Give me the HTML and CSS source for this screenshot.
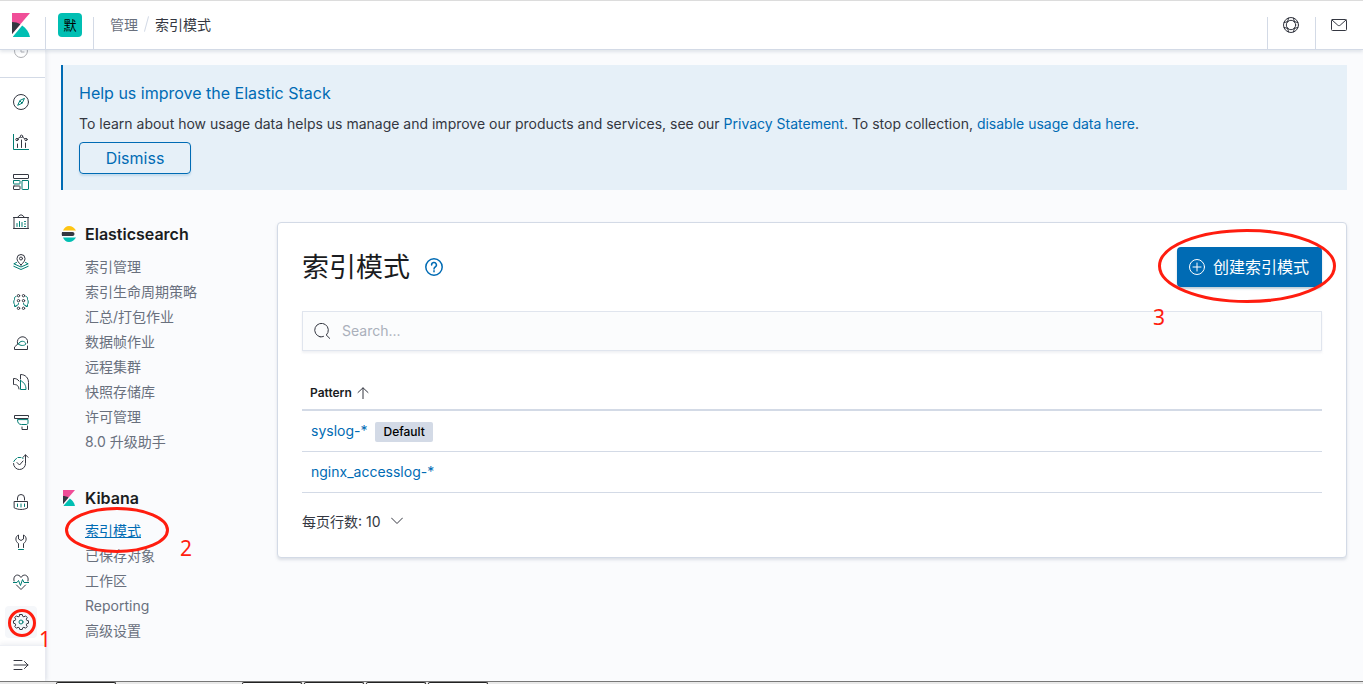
FILE: index.html
```html
<!DOCTYPE html>
<html lang="zh-CN">
<head>
<meta charset="utf-8">
<title>索引模式 - Kibana</title>
<link rel="stylesheet" href="styles.css">
</head>
<body>
<header class="header">
  <a class="header-logo" href="#" aria-label="Kibana">
    <svg width="18" height="24" viewBox="0 0 18 24"><path fill="#F04E98" d="M0 0v21L18 0z"/><path fill="#343741" d="M0 9v12l8.300-9.800C5.900 9.800 3.100 9 0 9z"/><path fill="#00BFB3" d="M10.200 12.600 1 23.400V24h17c-.9-4.700-3.800-8.800-7.800-11.400z"/></svg>
  </a>
  <span class="divider"></span>
  <button class="space" type="button" aria-label="默认"><span class="space-avatar">默</span></button>
  <span class="divider"></span>
  <nav class="crumbs" aria-label="breadcrumb">
    <a href="#">管理</a><span class="slash"></span><span class="crumb-current">索引模式</span>
  </nav>
  <span class="divider"></span>
  <button class="header-button" type="button" aria-label="Help">
    <svg class="icon" viewBox="0 0 16 16"><circle cx="8" cy="8" r="7.500"/><circle cx="8" cy="8" r="4.700"/><path d="M5.600 1.200 4.300 5.200M1.200 5.600l4-1.300M10.400 1.200l1.300 4M14.800 5.600l-4-1.300M5.600 14.800l-1.300-4M1.200 10.400l4 1.300M10.400 14.800l1.300-4M14.800 10.400l-4 1.300"/></svg>
  </button>
  <span class="divider"></span>
  <button class="header-button" type="button" aria-label="Newsfeed">
    <svg class="icon" viewBox="0 0 16 16"><rect x=".5" y="2.500" width="15" height="11" rx="1"/><path d="m1 3 5.800 5.200c.7.600 1.700.600 2.400 0L15 3"/></svg>
  </button>
</header>

<div class="body">
  <nav class="sidebar" aria-label="Kibana">
    <div class="recent"><svg class="icon" viewBox="0 0 16 16"><circle cx="8" cy="9" r="6.500"/><path d="M8 5v5h3"/></svg></div>
    <ul class="apps">
      <li><a href="#" aria-label="Discover"><svg class="icon" viewBox="0 0 16 16"><circle cx="8" cy="8" r="7.500"/><path class="teal" d="m11.300 4.700-2.100 4.500-4.500 2.100 2.100-4.500zM7 7l2 2"/></svg></a></li>
      <li><a href="#" aria-label="Visualize"><svg class="icon" viewBox="0 0 16 16"><path class="teal" d="M.5 0v15.500H16"/><path d="M4.500 10v3.500M8.500 6v7.500M12.500 9v4.500M5 4.500 7.500 3M9.500 3l2 1.500"/><circle cx="4" cy="5.500" r="1.200"/><circle cx="8.500" cy="2.300" r="1.200"/><circle cx="13" cy="5.500" r="1.200"/></svg></a></li>
      <li><a href="#" aria-label="Dashboard"><svg class="icon" viewBox="0 0 16 16"><rect x=".5" y=".5" width="15" height="4" rx=".5"/><rect x=".5" y="12" width="6.500" height="3.500" rx=".5"/><rect class="teal" x=".5" y="6.500" width="6.500" height="3.500" rx=".5"/><rect class="teal" x="9" y="6.500" width="6.500" height="9" rx=".5"/></svg></a></li>
      <li><a href="#" aria-label="Canvas"><svg class="icon" viewBox="0 0 16 16"><path d="M.5 3.500h15M1 4v10M15 4v10M.5 14.500h15M4.500 3.300 7 1h2l2.500 2.300"/><path class="teal" d="M4 9.500v3M6.500 7.500v5M9 8.500v4M12.500 7.500h-1M12.500 10h-1M12.500 12.500h-1"/></svg></a></li>
      <li><a href="#" aria-label="Maps"><svg class="icon" viewBox="0 0 16 16"><path d="M8 11C5.500 8.500 4 6.700 4 4.500a4 4 0 0 1 8 0C12 6.700 10.500 8.500 8 11z"/><circle cx="8" cy="4.500" r="1.500"/><path class="teal" d="M3.500 8.500.8 9.800 8 13l7.200-3.200-2.700-1.300M.8 12.300 8 15.500l7.200-3.200"/></svg></a></li>
      <li><a href="#" aria-label="Machine Learning"><svg class="icon" viewBox="0 0 16 16"><g><circle cx="5.500" cy="1.700" r="1.200"/><circle cx="10.500" cy="1.700" r="1.200"/><circle cx="5.500" cy="6.700" r="1.200"/><circle cx="10.500" cy="6.700" r="1.200"/><circle cx="5.500" cy="14.300" r="1.200"/><circle cx="10.500" cy="14.300" r="1.200"/></g><path class="teal" d="M3 2.500c-1.500 0-1.500 1-1.500 3C.5 7 .5 9 1.500 10.500v2h1.500M5.500 9.500c0 1.500-.8 2-2.500 2M13 2.500c1.500 0 1.500 1 1.500 3 1 1.500 1 3.500 0 5v2h-1.500M10.500 9.500c0 1.500.8 2 2.500 2"/></svg></a></li>
      <li><a href="#" aria-label="Infrastructure"><svg class="icon" viewBox="0 0 16 16"><path d="M4.500 9.500A5.200 5.200 0 1 1 14.500 6.500V9M14.500 12v3.500h-13V13L5 9.800"/><path class="teal" d="M5.500 10c1.200-3.700 6.300-3.700 7.500 0-1.500 2-6 2-7.500 0z"/></svg></a></li>
      <li><a href="#" aria-label="Logs"><svg class="icon" viewBox="0 0 16 16"><path d="M6 15C5.500 11 3.500 10.500.5 10.500v-6C3 4.500 4.500 5 6 7M7.500 5V.5c5 0 8 3.500 8 8v7"/><path class="teal" d="M7.500 6.500v9h5.500c0-4-1.500-7-5.500-9z"/></svg></a></li>
      <li><a href="#" aria-label="APM"><svg class="icon" viewBox="0 0 16 16"><path d="M15.500 3V1.500H1.500v3H15M9 13v2.500h5.500V12"/><path class="teal" d="M15 6v3c0 1-1 1.500-2 1.500H8.500C6 10.500 4.500 9 4.500 6z"/></svg></a></li>
      <li><a href="#" aria-label="Uptime"><svg class="icon" viewBox="0 0 16 16"><path d="M.5 9.500a6 6 0 0 0 12 0V1M10 3.300 12.500.8 15 3.300M4 8.500l2.500 2.500L10 7"/><path class="teal" d="M.8 7.500a6 6 0 0 1 2.700-3M5 3.500h2.500M9 3.800l1 .5"/></svg></a></li>
      <li><a href="#" aria-label="SIEM"><svg class="icon" viewBox="0 0 16 16"><path d="M1.500 7.500h13V14c-4 2-9 2-13 0zM4.500 6V4a3.500 3.500 0 0 1 7 0v2"/><path class="teal" d="M4.500 10v2.500M8 10v3M11.500 10v2.500"/></svg></a></li>
      <li><a href="#" aria-label="Dev Tools"><svg class="icon" viewBox="0 0 16 16"><path d="M5.500 13.500V9.500C2 7.500 2 2.500 5.500 1v4L8 6.500 10.500 5V1C14 2.500 14 7.500 10.500 9.500v4"/><path class="teal" d="M5.500 15.500h5"/></svg></a></li>
      <li><a href="#" aria-label="Stack Monitoring"><svg class="icon" viewBox="0 0 16 16"><path d="M1 7C-.5 1 5.500-1 8 3.500 10.500-1 16.500 1 15 7M3.500 11 8 15.500l4.500-4.500"/><path class="teal" d="M0 8.500h4L5.500 6.500l2 5 2-6 1.500 3h5"/></svg></a></li>
      <li><a class="active" href="#" aria-label="Management"><svg class="icon" viewBox="0 0 16 16"><path d="m6.800.5h2.400l.5 1.800 1.200.5 1.700-.9 1.600 1.600-.9 1.700.5 1.200 1.700.4v2.400l-1.700.5-.5 1.200.9 1.700-1.600 1.600-1.700-.9-1.200.5-.5 1.700H6.800l-.5-1.700-1.200-.5-1.700.9-1.600-1.600.9-1.700-.5-1.200L.5 9.200V6.800l1.700-.4.5-1.200-.9-1.700 1.600-1.600 1.700.9 1.200-.5z"/><circle class="teal" cx="8" cy="8" r="2"/></svg></a>
        <svg class="ring ring-nav" viewBox="0 0 28 28"><ellipse cx="14" cy="14" rx="12.500" ry="12.500"/></svg><span class="step step-one">1</span>
      </li>
    </ul>
    <button class="expand" type="button" aria-label="Expand"><svg class="icon" viewBox="0 0 16 16"><path d="M1 3.500h8M1 8h14M1 12.500h8M11.500 4.500 15 8l-3.500 3.500"/></svg></button>
  </nav>

  <main class="page">
    <section class="callout">
      <h2>Help us improve the Elastic Stack</h2>
      <p>To learn about how usage data helps us manage and improve our products and services, see our <a href="#">Privacy Statement</a>. To stop collection, <a href="#">disable usage data here</a>.</p>
      <button class="dismiss" type="button">Dismiss</button>
    </section>

    <div class="columns">
      <nav class="sections" aria-label="管理">
        <section class="section">
          <h3><svg width="16" height="16" viewBox="0 0 16 16"><path fill="#FEC514" d="M2 4.500h13C13.500 2 11 0 8 0 5.500 0 3 2 2 4.500z"/><path fill="#343741" d="M1 6h10.500a2 2 0 0 1 0 4H1a7 7 0 0 1 0-4z"/><path fill="#00BFB3" d="M2 11.500h13C13.500 14 11 16 8 16s-5-2-6-4.500z"/></svg>Elasticsearch</h3>
          <ul>
            <li><a href="#">索引管理</a></li>
            <li><a href="#">索引生命周期策略</a></li>
            <li><a href="#">汇总/打包作业</a></li>
            <li><a href="#">数据帧作业</a></li>
            <li><a href="#">远程集群</a></li>
            <li><a href="#">快照存储库</a></li>
            <li><a href="#">许可管理</a></li>
            <li><a href="#">8.0 升级助手</a></li>
          </ul>
        </section>
        <section class="section">
          <h3><svg width="16" height="16" viewBox="0 0 16 16"><path fill="#F04E98" d="M2 0v14L14 0z"/><path fill="#343741" d="M2 6v8l5.500-6.500C6 6.500 4 6 2 6z"/><path fill="#00BFB3" d="M8.800 8.400 2.700 15.600V16H14c-.6-3.100-2.500-5.900-5.200-7.600z"/></svg>Kibana</h3>
          <ul>
            <li><a class="selected" href="#">索引模式</a>
              <svg class="ring ring-menu" viewBox="0 0 104 46"><ellipse cx="52" cy="23" rx="50.500" ry="21.500"/></svg><span class="step step-two">2</span></li>
            <li><a href="#">已保存对象</a></li>
            <li><a href="#">工作区</a></li>
            <li><a href="#">Reporting</a></li>
            <li><a href="#">高级设置</a></li>
          </ul>
        </section>
      </nav>

      <section class="panel">
        <div class="panel-head">
          <h1>索引模式</h1>
          <button class="help" type="button" aria-label="帮助"><svg width="18" height="18" viewBox="0 0 18 18"><circle cx="9" cy="9" r="8.200"/><path d="M6.600 7a2.400 2.400 0 1 1 3.600 2c-.8.500-1.200.9-1.200 2M9 12.800v1"/></svg></button>
          <div class="create-wrap">
            <button class="create" type="button"><svg class="icon" viewBox="0 0 16 16"><circle cx="8" cy="8" r="7.500"/><path d="M8 4v8M4 8h8"/></svg>创建索引模式</button>
            <svg class="ring ring-create" viewBox="0 0 178 74"><ellipse cx="89" cy="37" rx="87.500" ry="35.500"/></svg><span class="step step-three">3</span>
          </div>
        </div>
        <label class="search">
          <svg class="icon" viewBox="0 0 16 16"><path d="M6 13.800A6.800 6.800 0 1 1 12.300 12L16 15.700M6 13.800c1.500.2 2.500 0 3.500-.4"/></svg>
          <input type="search" placeholder="Search..." aria-label="Search">
        </label>
        <table class="patterns">
          <thead><tr><th scope="col"><button class="sort" type="button">Pattern<svg width="12" height="12" viewBox="0 0 12 12"><path d="M6 12V1M1 5.500 6 .8l5 4.700"/></svg></button></th></tr></thead>
          <tbody>
            <tr><td><a href="#">syslog-*</a><span class="badge">Default</span></td></tr>
            <tr><td><a href="#">nginx_accesslog-*</a></td></tr>
          </tbody>
        </table>
        <button class="per-page" type="button">每页行数: 10<svg width="12" height="8" viewBox="0 0 12 8"><path d="m.5 1 5.500 5.500L11.500 1"/></svg></button>
      </section>
    </div>
  </main>
</div>
<div class="taskbar"><span></span><span></span><span></span><span></span><span></span></div>
</body>
</html>
```
FILE: styles.css
```css
* { box-sizing: border-box; }
body {
  margin: 0;
  height: 100vh;
  display: flex;
  flex-direction: column;
  overflow: hidden;
  background: #fafbfd;
  color: #343741;
  font: 14px/21px Inter, "Noto Sans CJK SC", sans-serif;
}
h1, h2, h3, p, ul { margin: 0; padding: 0; font-weight: 400; }
ul { list-style: none; }
a { color: #006bb4; text-decoration: none; }
button { padding: 0; border: 0; background: none; color: inherit; font: inherit; cursor: pointer; }
svg { display: block; flex: none; fill: none; stroke-linecap: round; stroke-linejoin: round; }
.icon { width: 16px; height: 16px; stroke: #343741; }
.teal { stroke: #017d73; }

.header {
  position: relative;
  z-index: 2;
  flex: none;
  display: flex;
  align-items: center;
  height: 50px;
  border-top: 1px solid #dcdcdc;
  border-bottom: 1px solid #d3dae6;
  background: #fff;
  box-shadow: 0 2px 3px rgba(152, 162, 179, .25);
}
.header-logo { width: 45px; padding: 0 0 1px 12px; }
.divider { flex: none; align-self: flex-end; width: 1px; height: 32px; background: #d3dae6; }
.space { width: 47px; padding-left: 12px; }
.space-avatar {
  display: block;
  width: 24px;
  height: 24px;
  border-radius: 4px;
  background: #00bfb3;
  color: #000;
  font-size: 13px;
  line-height: 24px;
}
.crumbs { flex: 1; display: flex; align-items: center; padding: 0 0 2px 16px; }
.crumbs a { color: #69707d; }
.slash { width: 1px; height: 16px; margin: 0 8px; background: #d3dae6; transform: rotate(15deg); }
.header-button { width: 47px; padding-right: 2px; display: flex; justify-content: center; }

.body { flex: 1; min-height: 0; display: flex; }
.sidebar {
  flex: none;
  width: 46px;
  display: flex;
  flex-direction: column;
  border-right: 1px solid #eef0f5;
  background: #fff;
  box-shadow: 1px 0 4px rgba(152, 162, 179, .2);
}
.recent { flex: none; height: 28px; padding-left: 13px; overflow: hidden; border-bottom: 1px solid #d3dae6; }
.recent .icon { margin-top: -8px; opacity: .4; }
.apps { flex: 1; padding: 4px 5px 0; }
.apps li { position: relative; height: 40px; display: flex; align-items: center; }
.apps a { display: flex; align-items: center; justify-content: center; width: 32px; height: 32px; border-radius: 4px; }
.apps .active { background: #f5f7fa; }
.expand { flex: none; height: 36px; padding: 3px 0 0 13px; border-top: 1px solid #eef0f5; box-shadow: 0 -2px 4px rgba(152, 162, 179, .15); }

.page { flex: 1; min-width: 0; padding: 15px 16px 0 15px; }
.callout { padding: 16px; border-left: 2px solid #006bb4; background: #e6f0f8; }
.callout h2 { color: #006bb4; font-size: 16px; line-height: 24px; }
.callout p { margin: 8px 0; }
.dismiss {
  display: block;
  min-width: 112px;
  height: 32px;
  border: 1px solid #006bb4;
  border-radius: 4px;
  color: #006bb4;
  font-size: 16px;
  box-shadow: 0 2px 2px rgba(0, 107, 180, .15);
}
.columns { display: flex; align-items: flex-start; margin-top: 32px; }
.sections { flex: none; width: 216px; display: grid; gap: 32px; }
.section h3 { display: flex; align-items: center; gap: 8px; color: #1a1c21; font-size: 16px; line-height: 24px; font-weight: 600; }
.section ul { margin-top: 8px; padding-left: 24px; }
.section li { position: relative; height: 25px; line-height: 25px; }
.section a { color: #69707d; }
.section .selected { color: #006bb4; text-decoration: underline; }

.panel {
  flex: 1;
  min-width: 0;
  padding: 24px;
  border: 1px solid #d3dae6;
  border-radius: 4px;
  background: #fff;
  box-shadow: 0 2px 3px rgba(152, 162, 179, .3);
}
.panel-head { display: flex; align-items: center; height: 40px; }
.panel-head h1 { padding-top: 2px; color: #1a1c21; font-size: 27px; line-height: 38px; }
.help { margin-left: 15px; }
.help svg { stroke: #006bb4; stroke-width: 1.5; }
.create-wrap { position: relative; margin-left: auto; }
.create {
  display: flex;
  align-items: center;
  gap: 8px;
  height: 40px;
  padding: 0 13px 0 12px;
  border-radius: 4px;
  background: #006bb4;
  color: #fff;
  font-size: 16px;
  box-shadow: 0 2px 2px rgba(54, 97, 126, .3);
}
.create .icon { stroke: #fff; }
.search {
  display: flex;
  align-items: center;
  gap: 12px;
  height: 40px;
  margin-top: 24px;
  padding: 0 11px;
  border: 1px solid #e0e5ee;
  background: #fbfcfd;
  box-shadow: 0 2px 2px rgba(152, 162, 179, .15);
}
.search input { flex: 1; min-width: 0; padding: 0 0 1px; border: 0; outline: 0; background: none; color: #343741; font: inherit; }
.search input::placeholder { color: #aab0bb; opacity: 1; }
.patterns { width: 100%; margin-top: 24px; border-collapse: separate; border-spacing: 0; }
.patterns th { height: 36px; padding: 2px 8px 0; border-bottom: 2px solid #d3dae6; text-align: left; }
.sort { display: flex; align-items: center; gap: 5px; color: #1a1c21; font-size: 12px; line-height: 20px; font-weight: 600; }
.sort svg { stroke: #343741; }
.patterns td { height: 41px; padding: 0 9px 1px; border-bottom: 1px solid #d3dae6; }
.badge {
  display: inline-block;
  margin-left: 8px;
  padding: 0 8px;
  border-radius: 2px;
  background: #d3dae6;
  color: #000;
  font-size: 12px;
  line-height: 20px;
  font-weight: 500;
}
.per-page { display: flex; align-items: center; gap: 10px; height: 24px; margin-top: 16px; }
.per-page svg { stroke: #343741; }

.ring { position: absolute; z-index: 3; pointer-events: none; stroke: #ff1d0f; stroke-width: 3; }
.step { position: absolute; z-index: 3; color: #ff1d0f; font: 21px/24px "Noto Sans", sans-serif; }
.ring-nav { left: 3px; top: 7px; width: 28px; height: 28px; }
.step-one { left: 34px; top: 25px; }
.ring-menu { left: -20px; top: -11px; width: 104px; height: 46px; }
.step-two { left: 95px; top: 18px; }
.ring-create { left: -19px; top: -18px; width: 178px; height: 74px; }
.step-three { left: -24px; top: 58px; }

.taskbar { flex: none; display: flex; gap: 2px; height: 3px; padding-left: 56px; border-top: 1px solid #777; background: #e9e9e9; }
.taskbar span { width: 60px; height: 2px; border: solid #222; border-width: 1px 1px 0; border-radius: 2px 2px 0 0; background: #fff; }
.taskbar span:first-child { margin-right: 124px; }
```
